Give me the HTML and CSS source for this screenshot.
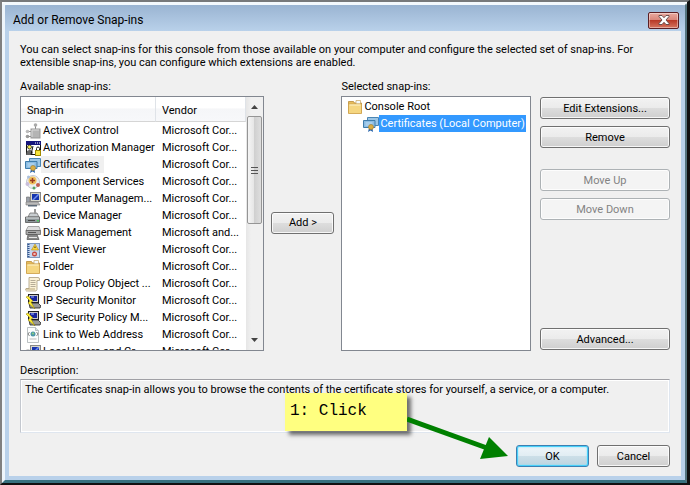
FILE: index.html
```html
<!DOCTYPE html>
<html lang="en">
<head>
    <meta charset="UTF-8">
    <meta name="viewport" content="width=device-width, initial-scale=1.0">
    <title>Add or Remove Snap-ins</title>
    <link rel="stylesheet" href="styles.css">
</head>
<body>
    <svg class="sprites" aria-hidden="true">
        <symbol id="activex" viewBox="0 0 16 16">
            <path d="M10.5 3v3M4 8.5h3M4 13.5h3" stroke="#888" stroke-width="1"/>
            <rect x="6" y="6" width="9" height="9" fill="#b4b4b4" stroke="#999"/>
            <path d="M7 14V7h7" fill="none" stroke="#d8d8d8"/>
            <circle cx="10.500" cy="2" r="1.800" fill="#aaa"/>
            <circle cx="2.500" cy="8.500" r="1.800" fill="#bbb"/>
            <circle cx="2.500" cy="13.500" r="1.800" fill="#999"/>
        </symbol>
        <symbol id="authman" viewBox="0 0 16 16">
            <rect x="1.500" y="1.500" width="14" height="13" fill="#fff" stroke="#111"/>
            <path d="M1 1h15v4H1z" fill="#15157c"/>
            <path d="M10 3h1M12 3h1M14 3h1" stroke="#fff"/>
            <circle cx="4.500" cy="7" r="2" fill="#f8ee50" stroke="#222" stroke-width=".8"/>
            <path d="M1 15l1-4 3-1.500 3 2.500-1 3z" fill="#666"/>
            <path d="M8 6l-2 8.500h3" stroke="#111" fill="none"/>
            <path d="M11.500 10V8.500a1.500 1.500 0 0 1 3 0V10" fill="none" stroke="#222"/>
            <rect x="10.500" y="10.500" width="5" height="5" fill="#f6e53c" stroke="#a08a00"/>
        </symbol>
        <symbol id="cert" viewBox="0 0 16 16">
            <path d="M4.500 1.500h11v8h-11z" fill="#9cc6e6" stroke="#4a86b4"/>
            <path d="M.5 4.500H12v7H.5z" fill="#8bbce2" stroke="#3f7cab"/>
            <path d="M2.500 7h7M2.500 9h4" stroke="#c3e0f5"/>
            <path d="M6 12l-1 4 2.500-1.500L10 16l-.5-4z" fill="#2d68ad"/>
            <circle cx="8" cy="11" r="2.500" fill="#d9ae45" stroke="#a67c2a" stroke-width=".6"/>
        </symbol>
        <symbol id="component" viewBox="0 0 16 16">
            <circle cx="8" cy="8" r="6.500" fill="#eceef2" stroke="#c4c8d0"/>
            <circle cx="7.500" cy="6.500" r="4" fill="#efc05e"/>
            <path d="M7.500 4v5M5 6.500h5" stroke="#9a3b21" stroke-width="1.500"/>
            <circle cx="2.500" cy="10" r="2" fill="#c9bedb"/>
            <circle cx="13" cy="11" r="2" fill="#c05a50"/>
            <circle cx="9" cy="14" r="1.500" fill="#57a263"/>
            <circle cx="3.500" cy="3" r="1.500" fill="#aac0dc"/>
        </symbol>
        <symbol id="computer" viewBox="0 0 16 16">
            <rect x="5.500" y="1.500" width="10" height="9" fill="#d7d7cc" stroke="#888"/>
            <path d="M7 3h7v6H7z" fill="#1634ae"/>
            <path d="M7 9l6-6h1v1L9 9z" fill="#6f8ef0"/>
            <path d="M1.500 6h3v6h-3z" fill="#9aa0aa" stroke="#666" stroke-width=".6"/>
            <path d="M1 11h12l2 3H1z" fill="#bbb" stroke="#777" stroke-width=".6"/>
            <path d="M3 14h9v1.500H3z" fill="#5d6a78"/>
        </symbol>
        <symbol id="device" viewBox="0 0 16 16">
            <path d="M5 5h7l2 4H3z" fill="#c8cdd0" stroke="#666" stroke-width=".7"/>
            <path d="M9 1h2v5H9z" fill="#999"/>
            <path d="M.500 9h14v5.500H.500z" fill="#8f989b" stroke="#555" stroke-width=".8"/>
            <path d="M1 10h13" stroke="#dfe3e5"/>
            <path d="M3 12.500h7" stroke="#444"/>
            <path d="M12 12h2v1.500h-2z" fill="#4dc35c"/>
        </symbol>
        <symbol id="disk" viewBox="0 0 16 16">
            <path d="M3 1.500h11l1.500 4H1z" fill="#ddd" stroke="#888" stroke-width=".7"/>
            <path d="M1 5.500h14.500v4H1z" fill="#aaa" stroke="#555" stroke-width=".7"/>
            <path d="M3 9.500h9l2 5H2z" fill="#888" stroke="#555" stroke-width=".7"/>
            <path d="M3 7.500h8" stroke="#555"/>
            <path d="M4 12.500h8" stroke="#e8e8e8"/>
        </symbol>
        <symbol id="event" viewBox="0 0 16 16">
            <rect x="2.500" y="1.500" width="12" height="14" fill="#c4d6ee" stroke="#7f98bd"/>
            <path d="M3.500 2v13" stroke="#32558e" stroke-dasharray="1 1" stroke-width="2"/>
            <path d="M10 2l3.500 6h-7z" fill="#f9d43d" stroke="#b98b13" stroke-width=".6"/>
            <path d="M10 4.500V6" stroke="#222"/>
            <circle cx="9.500" cy="12" r="2.500" fill="#c6463d"/>
            <path d="M8.500 11l2 2M10.500 11l-2 2" stroke="#fff" stroke-width=".8"/>
        </symbol>
        <symbol id="folder" viewBox="0 0 16 16">
            <path d="M1.500 2.500h5l1 1.500h7v10h-13z" fill="#e6bd5c" stroke="#b98c37" stroke-width=".8"/>
            <path d="M9 1.500h4.500V5H9z" fill="#f4fafc" stroke="#c6a561" stroke-width=".7"/>
            <path d="M1.500 5h13v9.500h-13z" fill="#f5d680" stroke="#cfa24b" stroke-width=".8"/>
            <path d="M2.500 6h11" stroke="#fff4ca"/>
        </symbol>
        <symbol id="policy" viewBox="0 0 16 16">
            <path d="M4 1.500h9a1.500 1.500 0 0 1 1.500 1.500v1.500H12v9l-1 1.500H2.500a1.500 1.500 0 0 1-1.500-2.500h3z" fill="#fbf1d6" stroke="#a99c7e" stroke-width=".8"/>
            <path d="M5.500 4.500h5M5.500 6.500h5M5.500 8.500h5M5.500 10.500h5" stroke="#a59a86" stroke-width=".8"/>
            <path d="M1 13h9" stroke="#b7a579"/>
        </symbol>
        <symbol id="ipsec" viewBox="0 0 16 16">
            <rect x="3.500" y="1.500" width="10" height="8" fill="#c8c8c8" stroke="#222"/>
            <path d="M5 3h7v5H5z" fill="#17249b"/>
            <path d="M6 4h3" stroke="#9db1ff"/>
            <path d="M4 10h9l3 3-1 2H5z" fill="#999" stroke="#222" stroke-width=".8"/>
            <path d="M1 4l4 4-2 2 7 6-4-7 2-1-5-5z" fill="#ffee34" stroke="#8d7d00" stroke-width=".5"/>
        </symbol>
        <symbol id="weblink" viewBox="0 0 16 16">
            <path d="M2.500.500h8l3 3v12h-11z" fill="#fcfdfd" stroke="#a9b1b4" stroke-width=".8"/>
            <path d="M10.500.500v3h3" fill="#dde4e7" stroke="#a9b1b4" stroke-width=".8"/>
            <circle cx="8" cy="7" r="2.500" fill="#4e96a9"/>
            <circle cx="8" cy="6.500" r="1" fill="#8fd37c"/>
            <path d="M4.500 5L3 7l1.500 2M11.500 5L13 7l-1.500 2" fill="none" stroke="#666" stroke-width=".8"/>
            <path d="M4.500 12h7" stroke="#bbb"/>
        </symbol>
    </svg>

    <div class="frame">
        <div class="dialog">
            <header class="titlebar">
                <h1 class="title">Add or Remove Snap-ins</h1>
                <button type="button" class="close" aria-label="Close">
                    <svg width="12" height="10" viewBox="0 0 12 10">
                        <path d="M1 .500h3l2 2.200 2-2.200h3v1L8 5l3 3.500v1H8L6 7.300 4 9.500H1v-1L4 5 1 1.500z" fill="#fff" stroke="#5d4444" stroke-width=".9"/>
                    </svg>
                </button>
            </header>

            <main class="content">
                <p class="intro">You can select snap-ins for this console from those available on your computer and configure the selected set of snap-ins. For extensible snap-ins, you can configure which extensions are enabled.</p>

                <div class="columns">
                    <section class="available">
                        <h2 class="label">Available snap-ins:</h2>
                        <div class="panel list">
                            <table class="snapins">
                                <thead>
                                    <tr><th class="name-col">Snap-in</th><th>Vendor</th></tr>
                                </thead>
                                <tbody>
                                    <tr><td><svg class="icon"><use href="#activex"/></svg><span>ActiveX Control</span></td><td>Microsoft Cor...</td></tr>
                                    <tr><td><svg class="icon"><use href="#authman"/></svg><span>Authorization Manager</span></td><td>Microsoft Cor...</td></tr>
                                    <tr class="current"><td><svg class="icon"><use href="#cert"/></svg><span>Certificates</span></td><td>Microsoft Cor...</td></tr>
                                    <tr><td><svg class="icon"><use href="#component"/></svg><span>Component Services</span></td><td>Microsoft Cor...</td></tr>
                                    <tr><td><svg class="icon"><use href="#computer"/></svg><span>Computer Managem...</span></td><td>Microsoft Cor...</td></tr>
                                    <tr><td><svg class="icon"><use href="#device"/></svg><span>Device Manager</span></td><td>Microsoft Cor...</td></tr>
                                    <tr><td><svg class="icon"><use href="#disk"/></svg><span>Disk Management</span></td><td>Microsoft and...</td></tr>
                                    <tr><td><svg class="icon"><use href="#event"/></svg><span>Event Viewer</span></td><td>Microsoft Cor...</td></tr>
                                    <tr><td><svg class="icon"><use href="#folder"/></svg><span>Folder</span></td><td>Microsoft Cor...</td></tr>
                                    <tr><td><svg class="icon"><use href="#policy"/></svg><span>Group Policy Object ...</span></td><td>Microsoft Cor...</td></tr>
                                    <tr><td><svg class="icon"><use href="#ipsec"/></svg><span>IP Security Monitor</span></td><td>Microsoft Cor...</td></tr>
                                    <tr><td><svg class="icon"><use href="#ipsec"/></svg><span>IP Security Policy M...</span></td><td>Microsoft Cor...</td></tr>
                                    <tr><td><svg class="icon"><use href="#weblink"/></svg><span>Link to Web Address</span></td><td>Microsoft Cor...</td></tr>
                                    <tr><td><svg class="icon"><use href="#computer"/></svg><span>Local Users and Gr...</span></td><td>Microsoft Cor...</td></tr>
                                </tbody>
                            </table>
                            <div class="scrollbar">
                                <svg class="arrow" viewBox="0 0 7 4"><path d="M0 4l3.500-4L7 4z" fill="#444"/></svg>
                                <div class="thumb"><i></i><i></i><i></i></div>
                                <svg class="arrow down" viewBox="0 0 7 4"><path d="M0 0h7L3.500 4z" fill="#444"/></svg>
                            </div>
                        </div>
                    </section>

                    <button type="button" class="btn add">Add &gt;</button>

                    <section class="selected">
                        <h2 class="label">Selected snap-ins:</h2>
                        <div class="panel">
                            <ul class="tree">
                                <li>
                                    <div class="node"><svg class="icon"><use href="#folder"/></svg><span>Console Root</span></div>
                                    <ul>
                                        <li class="node active"><svg class="icon"><use href="#cert"/></svg><span>Certificates (Local Computer)</span></li>
                                    </ul>
                                </li>
                            </ul>
                        </div>
                    </section>

                    <div class="actions">
                        <button type="button" class="btn">Edit Extensions...</button>
                        <button type="button" class="btn">Remove</button>
                        <button type="button" class="btn move" disabled>Move Up</button>
                        <button type="button" class="btn" disabled>Move Down</button>
                        <button type="button" class="btn advanced">Advanced...</button>
                    </div>
                </div>

                <h2 class="label description-label">Description:</h2>
                <p class="description">The Certificates snap-in allows you to browse the contents of the certificate stores for yourself, a service, or a computer.</p>

                <footer class="buttons">
                    <button type="button" class="btn default">OK</button>
                    <button type="button" class="btn">Cancel</button>
                    <div class="callout">
                        <div class="note">1: Click</div>
                        <svg class="pointer" width="102" height="56" viewBox="0 0 102 56">
                            <path d="M0 13l80 29" stroke="#008000" stroke-width="5"/>
                            <path d="M82 31l19 19-28 3z" fill="#008000"/>
                        </svg>
                    </div>
                </footer>
            </main>
        </div>
    </div>
</body>
</html>
```

FILE: styles.css
```css
* {
    box-sizing: border-box;
}
body {
    margin: 0;
    font-family: Roboto, sans-serif;
    font-size: 11px;
    line-height: 13px;
    color: #000;
}
h1, h2, p, ul {
    margin: 0;
    padding: 0;
    font-size: 11px;
    font-weight: normal;
}
ul {
    list-style: none;
}
.sprites {
    display: none;
}
.frame {
    display: flex;
    min-height: 100vh;
    border-style: solid;
    border-width: 2px 3px 2px 2px;
    border-color: #77797b #111 #111 #808080;
}
.dialog {
    display: flex;
    flex-direction: column;
    flex: 1;
    min-width: 0;
    padding: 0 4px 4px 4px;
    border-style: solid;
    border-width: 3px 2px 3px 3px;
    border-color: #f4f9fd #55747f #37717f #eef5fb;
    border-radius: 4px 4px 0 0;
    background: linear-gradient(#9ab4d2, #b9d1ea 26px);
}
.titlebar {
    display: flex;
    align-items: center;
    justify-content: space-between;
    height: 26px;
    padding: 4px 2px 0 4px;
}
.title {
    font-size: 12px;
    line-height: 16px;
}
.close {
    display: flex;
    align-items: center;
    justify-content: center;
    width: 31px;
    height: 17px;
    padding: 0;
    border: 1px solid #5b1f24;
    border-radius: 2px;
    background: linear-gradient(#e9a99f, #d98579 48%, #b83a28 50%, #d67560);
    box-shadow: inset 0 0 0 1px rgba(255, 255, 255, 0.4);
}
.content {
    flex: 1;
    padding: 12px 11px 9px;
    background: #f0f0f0;
}
.intro {
    margin-bottom: 11px;
}
.columns {
    display: flex;
    gap: 7px;
}
.available {
    flex: 245;
    min-width: 0;
}
.selected {
    flex: 190;
    min-width: 0;
}
.label {
    margin-bottom: 3px;
}
.panel {
    height: 255px;
    border: 1px solid #828790;
    background: #fff;
    overflow: hidden;
}
.list {
    display: flex;
    align-items: flex-start;
}
.snapins {
    flex: 1;
    table-layout: fixed;
    border-collapse: separate;
    border-spacing: 0;
    width: 100%;
}
.snapins th {
    height: 25px;
    padding: 2px 6px 0;
    border-right: 1px solid #dfe3e8;
    border-bottom: 1px solid #d5d5d5;
    background: linear-gradient(#fff 45%, #f5f6f8 50%, #f7f8fa);
    font-weight: normal;
    text-align: left;
}
.snapins .name-col {
    width: 135px;
}
.snapins td {
    height: 17px;
    padding: 0 0 0 6px;
    white-space: nowrap;
}
.snapins td:first-child {
    display: flex;
    align-items: center;
    padding-left: 4px;
}
.snapins span {
    padding: 2px 5px 2px 2px;
}
.snapins .current span {
    background: #f0f0f0;
}
.icon {
    flex: none;
    width: 16px;
    height: 16px;
}
.scrollbar {
    display: flex;
    flex-direction: column;
    align-items: center;
    width: 17px;
    height: 100%;
    padding: 8px 0;
    background: linear-gradient(90deg, #e6e6e6, #f0f0f0 30%);
}
.arrow {
    width: 7px;
    height: 4px;
}
.thumb {
    display: flex;
    flex-direction: column;
    align-items: center;
    justify-content: center;
    gap: 2px;
    width: 15px;
    height: 108px;
    margin-top: 7px;
    border: 1px solid #959595;
    border-radius: 2px;
    background: linear-gradient(90deg, #f5f5f5, #e6e6e6 45%, #d0d0d0 50%, #dedede);
}
.thumb i {
    width: 7px;
    height: 1px;
    background: #555;
}
.down {
    margin-top: auto;
}
.btn {
    height: 22px;
    padding: 0 4px;
    border: 1px solid #707070;
    border-radius: 3px;
    background: linear-gradient(#f2f2f2, #ebebeb 50%, #dddddd 51%, #cfcfcf);
    box-shadow: inset 0 0 0 1px rgba(255, 255, 255, 0.8);
    color: #000;
    font-family: inherit;
    font-size: 11px;
    line-height: 13px;
}
.btn:disabled {
    border-color: #adb2b5;
    background: #f4f4f4;
    color: #838383;
}
.add {
    align-self: center;
    width: 63px;
    margin-top: 14px;
}
.tree {
    padding: 1px 5px;
}
.tree ul {
    padding-left: 16px;
}
.node {
    display: flex;
    align-items: center;
    height: 17px;
    white-space: nowrap;
}
.node span {
    padding: 2px 1px;
}
.node.active span {
    background: #3399ff;
    color: #fff;
}
.actions {
    display: flex;
    flex-direction: column;
    gap: 7px;
    width: 130px;
    margin-left: 2px;
    padding: 17px 0 1px;
}
.move {
    margin-top: 14px;
}
.advanced {
    margin-top: auto;
}
.description-label {
    margin-top: 13px;
    margin-bottom: 2px;
}
.description {
    height: 54px;
    padding: 3px 4px;
    border: 1px solid;
    border-color: #a0a0a5 #dfe6ef #dfe6ef #c4c8cf;
    box-shadow: inset 1px 1px 0 #fff, inset -1px -1px 0 #fff;
}
.buttons {
    display: flex;
    justify-content: flex-end;
    gap: 8px;
    position: relative;
    margin-top: 12px;
}
.buttons .btn {
    width: 73px;
}
.default {
    border-color: #3c7fb1;
    background: linear-gradient(#eef5f9, #e1edf3 50%, #ccdfe8 51%, #bdd3df);
    box-shadow: inset 0 0 0 1px #48d0fa, inset 0 0 2px 1px #7fdffc;
}
/* tutorial note pointing at the OK button */
.callout {
    display: flex;
    position: absolute;
    right: 161px;
    bottom: 24px;
    height: 50px;
}
.note {
    width: 122px;
    height: 38px;
    padding: 8px 5px;
    background: #ffff80;
    box-shadow: 4px 4px 4px rgba(0, 0, 0, 0.55);
    font-family: "Liberation Mono", monospace;
    font-size: 16px;
    line-height: 20px;
}
.pointer {
    margin-top: 13px;
}
```
